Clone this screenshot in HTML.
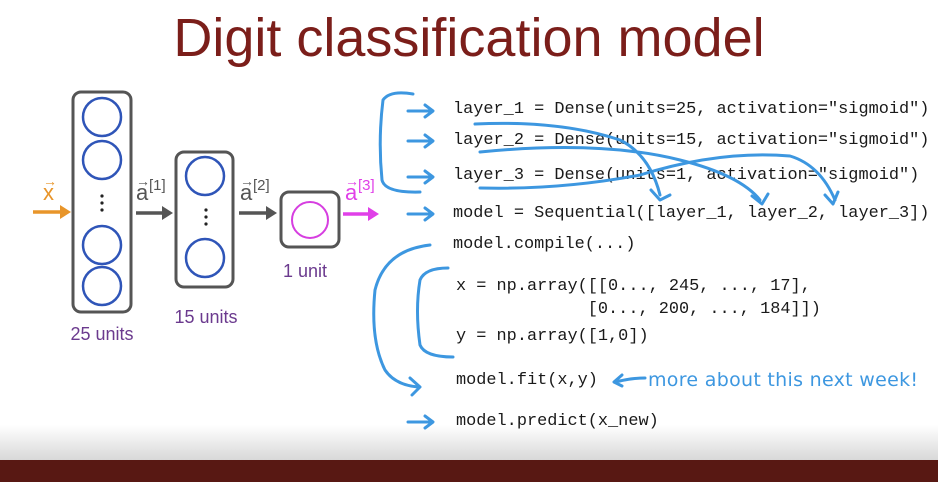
<!DOCTYPE html>
<html><head><meta charset="utf-8"><style>
html,body{margin:0;padding:0;}
body{width:938px;height:482px;overflow:hidden;background:#fff;position:relative;font-family:"Liberation Sans",sans-serif;}
.t{position:absolute;left:0;width:938px;text-align:center;top:7px;font-size:54px;color:#7b1e1a;}
.c{position:absolute;font-family:"Liberation Mono",monospace;font-size:16.9px;color:#1a1a1a;white-space:pre;line-height:20px;}
.bot{position:absolute;left:0;top:425px;width:938px;height:35px;background:linear-gradient(#fff,#d8d8d8);}
.bar{position:absolute;left:0;top:460px;width:938px;height:22px;background:#581813;}
svg{position:absolute;left:0;top:0;}
</style></head><body>
<div class="bot"></div>
<div class="t">Digit classification model</div>
<div class="c" style="left:453px;top:100px">layer_1 = Dense(units=25, activation="sigmoid")</div>
<div class="c" style="left:453px;top:131px">layer_2 = Dense(units=15, activation="sigmoid")</div>
<div class="c" style="left:453px;top:166px">layer_3 = Dense(units=1, activation="sigmoid")</div>
<div class="c" style="left:453px;top:204px">model = Sequential([layer_1, layer_2, layer_3])</div>
<div class="c" style="left:453px;top:235px">model.compile(...)</div>
<div class="c" style="left:456px;top:277px">x = np.array([[0..., 245, ..., 17],</div>
<div class="c" style="left:456px;top:300px">             [0..., 200, ..., 184]])</div>
<div class="c" style="left:456px;top:327px">y = np.array([1,0])</div>
<div class="c" style="left:456px;top:371px">model.fit(x,y)</div>
<div class="c" style="left:456px;top:412px">model.predict(x_new)</div>
<svg width="938" height="482">
<g fill="none" stroke="#555" stroke-width="3">
<rect x="73" y="92" width="58" height="220" rx="8"/>
<rect x="176" y="152" width="57" height="135" rx="8"/>
<rect x="281" y="192" width="58" height="55" rx="8"/>
</g>
<g fill="none" stroke="#2f55b8" stroke-width="2.5">
<circle cx="102" cy="117" r="19"/><circle cx="102" cy="160" r="19"/>
<circle cx="102" cy="245" r="19"/><circle cx="102" cy="286" r="19"/>
<circle cx="205" cy="176" r="19"/><circle cx="205" cy="258" r="19"/>
</g>
<circle cx="310" cy="220" r="18" fill="none" stroke="#d63ee0" stroke-width="2"/>
<g fill="#222"><circle cx="102" cy="196" r="1.6"/><circle cx="102" cy="203" r="1.6"/><circle cx="102" cy="210" r="1.6"/>
<circle cx="206" cy="210" r="1.6"/><circle cx="206" cy="217" r="1.6"/><circle cx="206" cy="224" r="1.6"/></g>
<g stroke-width="3.5">
<line x1="33" y1="212" x2="62" y2="212" stroke="#e8952a"/><path d="M60 205 L71 212 L60 219Z" fill="#e8952a"/>
<line x1="136" y1="213" x2="164" y2="213" stroke="#555"/><path d="M162 206 L173 213 L162 220Z" fill="#555"/>
<line x1="239" y1="213" x2="268" y2="213" stroke="#555"/><path d="M266 206 L277 213 L266 220Z" fill="#555"/>
<line x1="343" y1="214" x2="370" y2="214" stroke="#e040e8"/><path d="M368 207 L379 214 L368 221Z" fill="#e040e8"/>
</g>
<g font-family="Liberation Sans,sans-serif">
<text x="43" y="200" font-size="22" fill="#e8952a">x</text><text x="43" y="186" font-size="14" fill="#e8952a">→</text>
<text x="136" y="200" font-size="22" fill="#555">a</text><text x="136" y="186" font-size="14" fill="#555">→</text><text x="149" y="190" font-size="15" fill="#555">[1]</text>
<text x="240" y="200" font-size="22" fill="#555">a</text><text x="240" y="186" font-size="14" fill="#555">→</text><text x="253" y="190" font-size="15" fill="#555">[2]</text>
<text x="345" y="200" font-size="22" fill="#e040e8">a</text><text x="345" y="186" font-size="14" fill="#e040e8">→</text><text x="358" y="190" font-size="15" fill="#e040e8">[3]</text>
<text x="102" y="340" font-size="18" fill="#6b3a8e" text-anchor="middle">25 units</text>
<text x="206" y="323" font-size="18" fill="#6b3a8e" text-anchor="middle">15 units</text>
<text x="305" y="277" font-size="18" fill="#6b3a8e" text-anchor="middle">1 unit</text>
</g>
<g fill="none" stroke="#3d97e0" stroke-width="3" stroke-linecap="round" stroke-linejoin="round">
<path d="M413 94 Q390 90 383 100 Q378 140 382 180 Q385 193 420 192"/>
<path d="M408 111 H432 M425 105 L433 111 L425 117"/>
<path d="M408 141 H432 M425 135 L433 141 L425 147"/>
<path d="M408 177 H432 M425 171 L433 177 L425 183"/>
<path d="M408 214 H432 M425 208 L433 214 L425 220"/>
<path d="M408 422 H432 M425 416 L433 422 L425 428"/>
<path d="M475 124 Q560 120 620 140 Q650 155 660 195 M651 190 L660 200 L670 195"/>
<path d="M480 152 Q600 140 680 160 Q740 175 760 200 M752 196 L762 204 L768 194"/>
<path d="M480 188 Q560 190 640 175 Q720 150 790 156 Q820 165 835 200 M825 195 L833 204 L838 192"/>
<path d="M430 245 Q385 250 375 290 Q370 340 385 370 Q395 385 418 387 M410 378 L420 387 L412 395"/>
<path d="M448 268 Q425 268 420 280 Q415 310 420 345 Q425 357 453 357"/>
<path d="M645 378 Q630 378 616 382 M622 375 L614 382 L622 386"/>
</g>
<text x="648" y="386" font-family="DejaVu Sans,sans-serif" font-size="19" fill="#3d97e0" textLength="270">more about this next week!</text>
</svg>
<div class="bar"></div>
</body></html>
